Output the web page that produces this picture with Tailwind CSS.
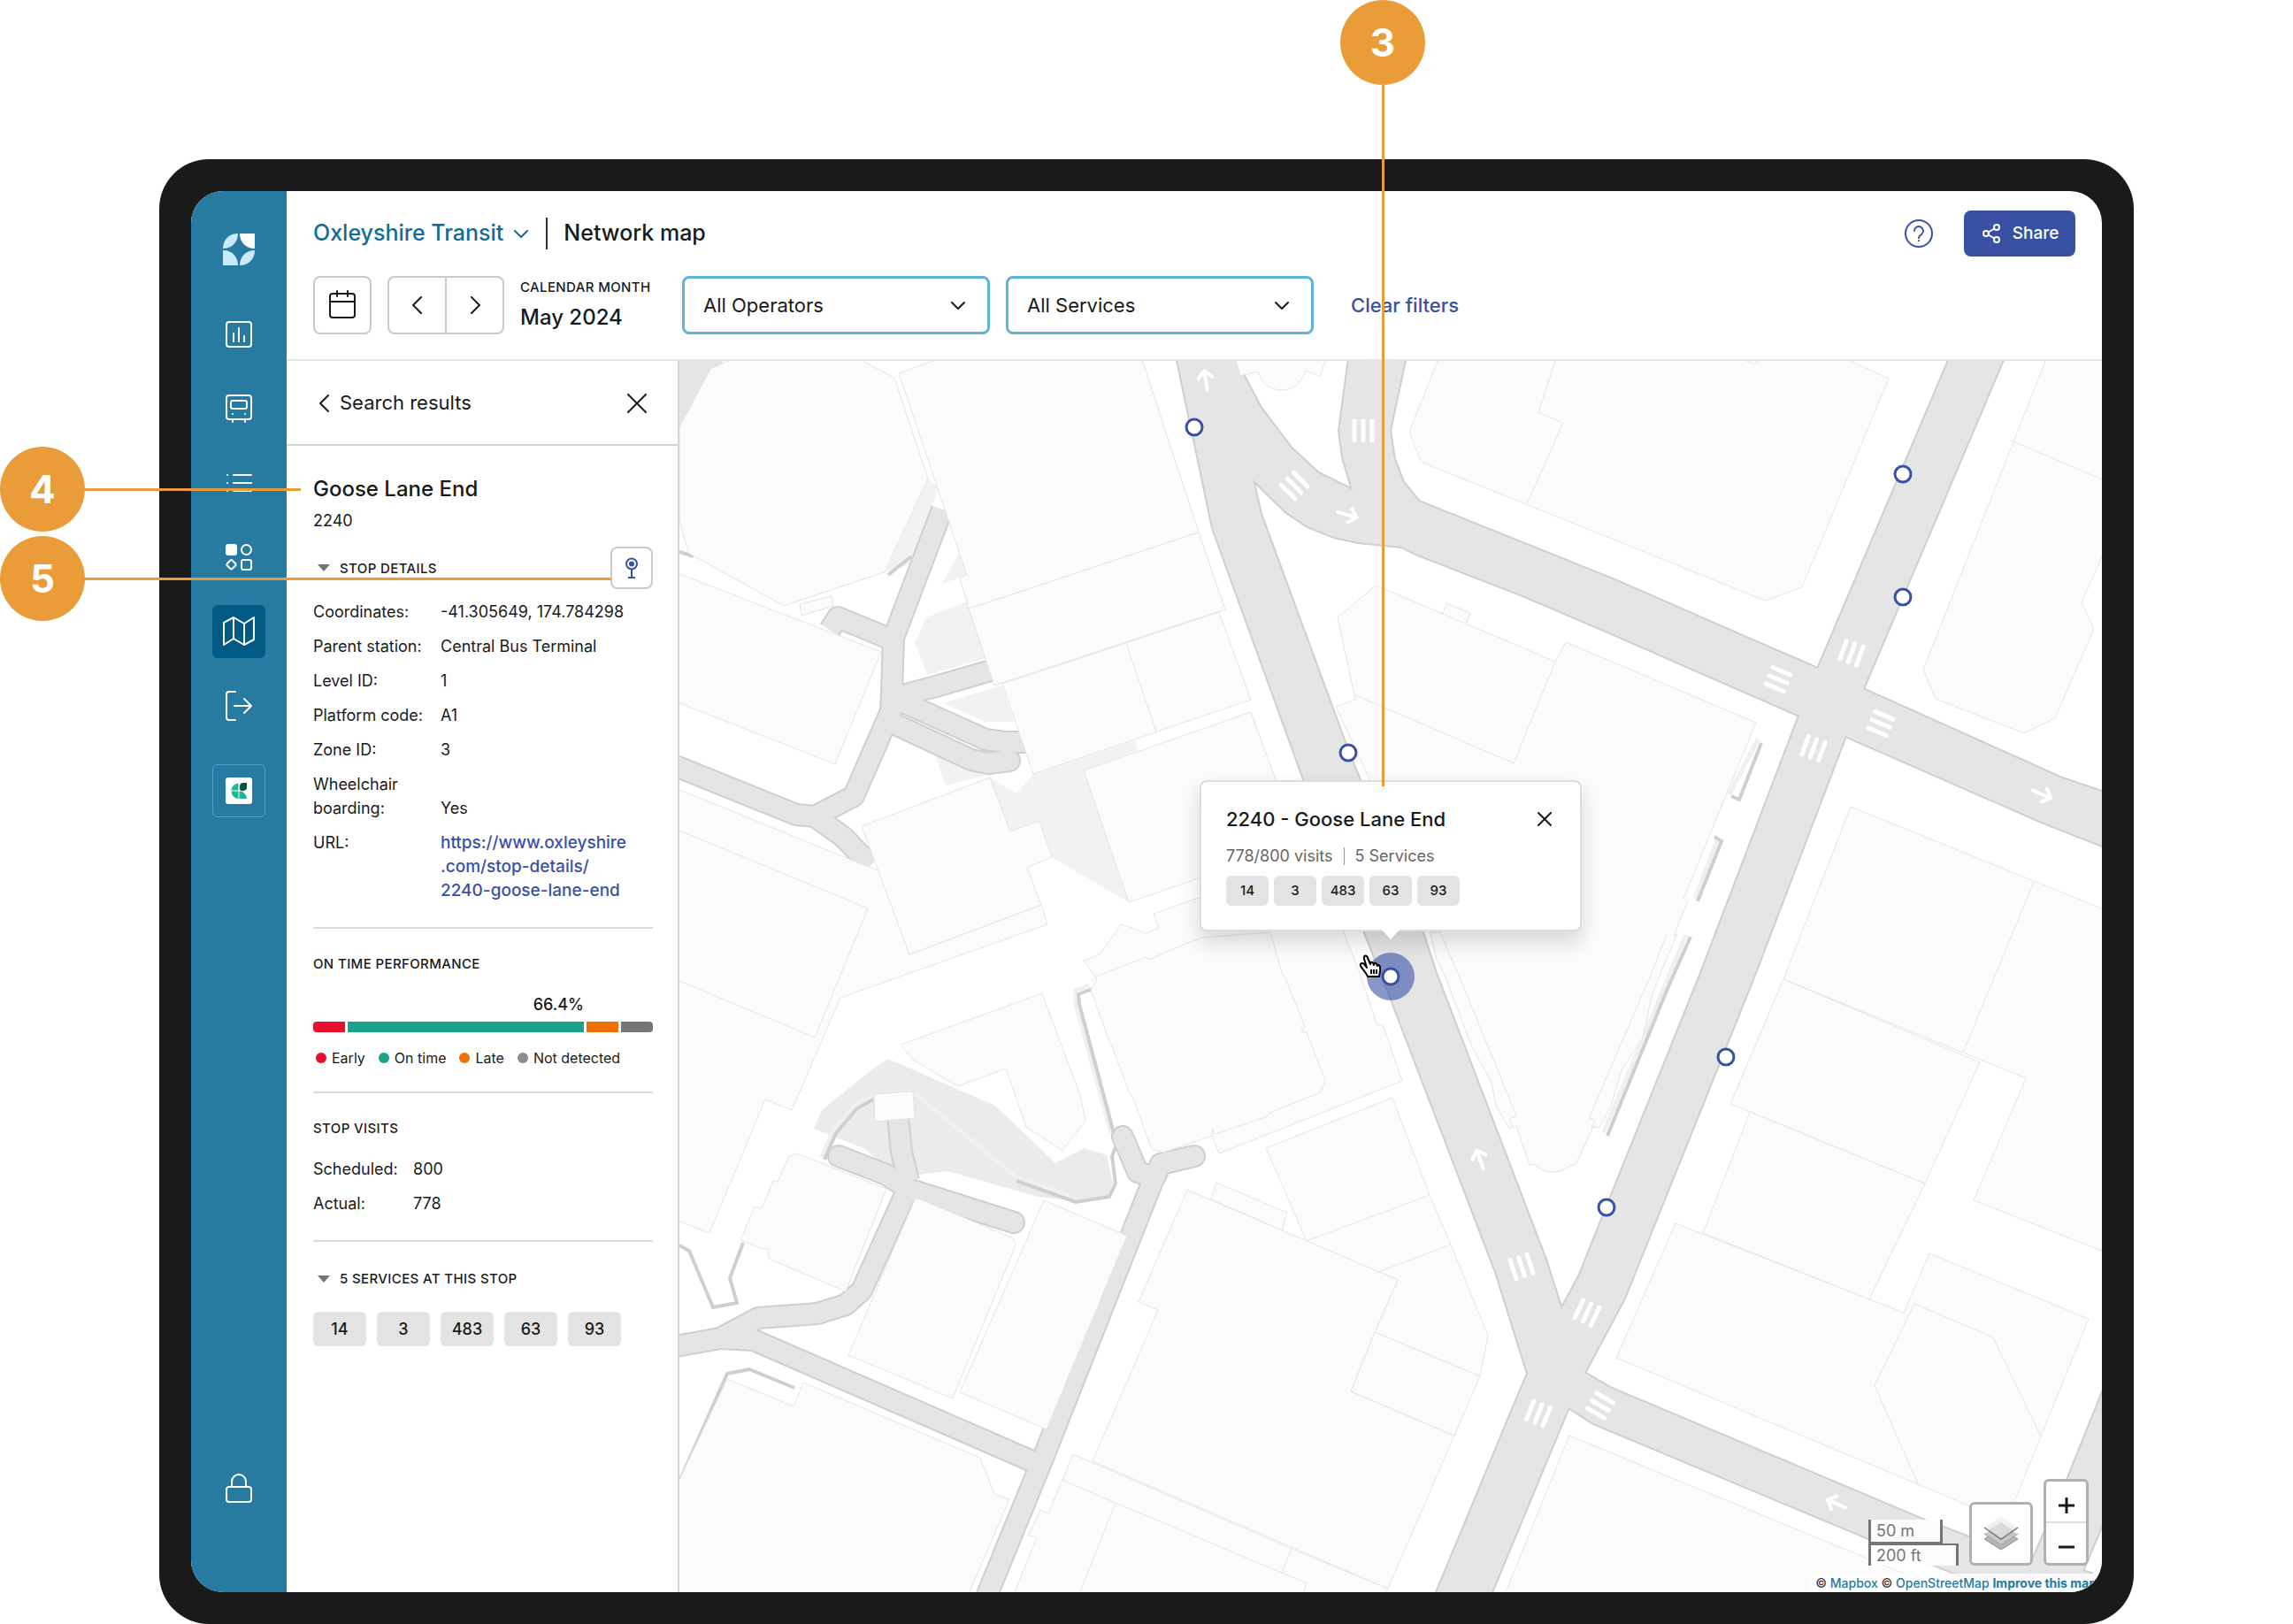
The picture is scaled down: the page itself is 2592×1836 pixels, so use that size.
<!DOCTYPE html>
<html lang="en">
<head>
    <meta charset="UTF-8">
    <meta name="viewport" content="width=device-width, initial-scale=1.0">
    <title>Network map - Oxleyshire Transit</title>
    <script src="https://cdn.jsdelivr.net/npm/@tailwindcss/browser@4"></script>
</head>
<body class="bg-white font-['Inter',sans-serif] text-[#1a1a1a]">

<div class="relative flex min-h-screen flex-col px-45 pt-45">

    <!-- Tablet frame -->
    <div class="flex flex-1 rounded-[56px] bg-[#1a1a1a] p-9">
        <div class="flex flex-1 overflow-hidden rounded-[36px] bg-white">

            <!-- Sidebar -->
            <nav class="flex w-27 shrink-0 flex-col items-center bg-[#277ba0] pt-12 pb-25 text-white" aria-label="Main">
                <a href="#" aria-label="Home" class="mb-12">
                    <svg class="size-9" viewBox="0 0 36 36">
                        <path d="M0 17C0 7 7 0 17 0C17 10 10 17 0 17Z" fill="#c9eafb"/>
                        <path d="M19 0H36V17C26 17 19 10 19 0Z" fill="#fff"/>
                        <path d="M0 19C10 19 17 26 17 36H0Z" fill="#c9eafb"/>
                        <path d="M19 36C19 26 26 19 36 19C36 29 29 36 19 36Z" fill="#c9eafb"/>
                    </svg>
                </a>
                <div class="flex flex-col gap-6">
                    <a href="#" aria-label="Reports" class="flex size-15 items-center justify-center">
                        <svg class="size-9" viewBox="0 0 36 36" fill="none" stroke="currentColor" stroke-width="2" stroke-linecap="round">
                            <rect x="4" y="4" width="28" height="28" rx="3"/><path d="M12 17v9M18 11v15M24 20v6"/>
                        </svg>
                    </a>
                    <a href="#" aria-label="Vehicles" class="flex size-15 items-center justify-center">
                        <svg class="size-9" viewBox="0 0 36 36" fill="none" stroke="currentColor" stroke-width="2" stroke-linecap="round">
                            <rect x="4" y="3" width="28" height="27" rx="3"/><rect x="9" y="9" width="18" height="9" rx="2"/><path d="M11 24h.1M25 24h.1M11 30v3M25 30v3"/>
                        </svg>
                    </a>
                    <a href="#" aria-label="Lists" class="flex size-15 items-center justify-center">
                        <svg class="size-9" viewBox="0 0 36 36" fill="none" stroke="currentColor" stroke-width="2" stroke-linecap="round">
                            <path d="M12 9h20M12 18h20M12 27h20M5 9h.1M5 18h.1M5 27h.1"/>
                        </svg>
                    </a>
                    <a href="#" aria-label="Apps" class="flex size-15 items-center justify-center">
                        <svg class="size-9" viewBox="0 0 36 36" fill="none" stroke="currentColor" stroke-width="2">
                            <rect x="4" y="4" width="11" height="11" rx="2" fill="currentColor"/><circle cx="26.500" cy="9.500" r="5.500"/>
                            <path d="M8.500 21.500L4.700 25.300a1.500 1.500 0 0 0 0 2L8.500 31a1.500 1.500 0 0 0 2 0L14.300 27.300a1.500 1.500 0 0 0 0-2L10.500 21.500a1.500 1.500 0 0 0-2 0Z"/><rect x="21" y="21" width="11" height="11" rx="2"/>
                        </svg>
                    </a>
                    <a href="#" aria-label="Network map" aria-current="page" class="flex size-15 items-center justify-center rounded-md bg-[#005a83]">
                        <svg class="size-9" viewBox="0 0 36 36" fill="none" stroke="currentColor" stroke-width="2" stroke-linejoin="round">
                            <path d="M1 8L12 2L24 9L35 2V27L24 33L12 26L1 33ZM12 2V26M24 9V33"/>
                        </svg>
                    </a>
                    <a href="#" aria-label="Export" class="flex size-15 items-center justify-center">
                        <svg class="size-9" viewBox="0 0 36 36" fill="none" stroke="currentColor" stroke-width="2" stroke-linecap="round" stroke-linejoin="round">
                            <path d="M14 2H7a3 3 0 0 0-3 3V31a3 3 0 0 0 3 3H14M13 18H32M24 10l8 8-8 8"/>
                        </svg>
                    </a>
                </div>
                <a href="#" aria-label="Workspace" class="mt-9 flex size-15 items-center justify-center rounded-md border border-[#4ba5d0]">
                    <svg class="size-[30px]" viewBox="0 0 30 30">
                        <rect width="30" height="30" rx="3" fill="#fff"/>
                        <path d="M14.500 6.500V14.500H6.500A8.500 8.500 0 0 1 14.500 6.500ZM14.500 15.500V24A8.500 8.500 0 0 1 6.500 15.500ZM15.500 15.500A8.500 8.500 0 0 1 24 24H15.500Z" fill="#1cb795"/>
                        <path d="M24 6V10a4.500 4.500 0 0 1-8 3.500V10a4 4 0 0 1 4-4Z" fill="#04543f"/>
                    </svg>
                </a>
                <a href="#" aria-label="Privacy" class="mt-auto">
                    <svg class="size-9" viewBox="0 0 36 36" fill="none" stroke="currentColor" stroke-width="2">
                        <rect x="4" y="17" width="28" height="17" rx="3"/><path d="M10 17V11a8 8 0 0 1 16 0v6"/>
                    </svg>
                </a>
            </nav>

            <div class="flex min-w-0 flex-1 flex-col">

                <!-- Header -->
                <header class="flex flex-col gap-[22px] border-b-2 border-[#e2e2e2] px-[30px] pt-[22px] pb-7">
                    <div class="flex h-13 items-center">
                        <button type="button" class="flex items-center gap-3 text-[25px] font-medium text-[#126d95]">
                            Oxleyshire Transit
                            <svg class="size-4" viewBox="0 0 16 16" fill="none" stroke="currentColor" stroke-width="2" stroke-linecap="round" stroke-linejoin="round"><path d="M1 5l7 7 7-7"/></svg>
                        </button>
                        <span class="mr-[18px] ml-5 h-9 w-0.5 bg-[#333]"></span>
                        <h1 class="text-[25px] font-medium">Network map</h1>
                        <div class="ml-auto flex items-center gap-[35px]">
                            <button type="button" aria-label="Help" class="text-[#3851a5]">
                                <svg class="size-8" viewBox="0 0 32 32" fill="none" stroke="currentColor" stroke-width="2" stroke-linecap="round">
                                    <circle cx="16" cy="16" r="15"/><path d="M11 13a5 5 0 1 1 8 4c-2 1.500-3 2-3 4M16 24v.3"/>
                                </svg>
                            </button>
                            <button type="button" class="flex h-13 w-[126px] items-center justify-center gap-3 rounded-lg bg-[#3851a5] text-[19px] font-medium text-white">
                                <svg class="size-6" viewBox="0 0 24 24" fill="none" stroke="currentColor" stroke-width="2"><circle cx="6" cy="12" r="3"/><circle cx="18" cy="5" r="3"/><circle cx="18" cy="19" r="3"/><path d="M8.500 10.500l7-4M8.500 13.500l7 4"/></svg>
                                Share
                            </button>
                        </div>
                    </div>
                    <div class="flex items-center">
                        <button type="button" aria-label="Pick a date" class="flex size-[66px] items-center justify-center rounded-lg border-2 border-[#cacaca]">
                            <svg class="size-9" viewBox="0 0 36 36" fill="none" stroke="currentColor" stroke-width="2" stroke-linecap="round"><rect x="4" y="5" width="28" height="27" rx="3"/><path d="M4 14h28M12 2v6M24 2v6"/></svg>
                        </button>
                        <div class="ml-[18px] flex h-[66px] w-33 divide-x-2 divide-[#cacaca] rounded-lg border-2 border-[#cacaca]">
                            <button type="button" aria-label="Previous month" class="flex flex-1 items-center justify-center">
                                <svg class="h-5 w-3" viewBox="0 0 12 20" fill="none" stroke="currentColor" stroke-width="2" stroke-linecap="round" stroke-linejoin="round"><path d="M10 1L1 10l9 9"/></svg>
                            </button>
                            <button type="button" aria-label="Next month" class="flex flex-1 items-center justify-center">
                                <svg class="h-5 w-3" viewBox="0 0 12 20" fill="none" stroke="currentColor" stroke-width="2" stroke-linecap="round" stroke-linejoin="round"><path d="M2 1l9 9-9 9"/></svg>
                            </button>
                        </div>
                        <div class="ml-[18px] w-[183px]">
                            <p class="text-[15px] leading-6 font-medium tracking-wide">CALENDAR MONTH</p>
                            <p class="mt-1 text-2xl leading-9 font-medium">May 2024</p>
                        </div>
                        <div class="relative">
                            <select aria-label="Operators" class="h-[66px] w-[348px] appearance-none rounded-lg border-3 border-[#60b4da] bg-white px-[21px] text-[22px]"><option>All Operators</option></select>
                            <svg class="pointer-events-none absolute top-1/2 right-7 size-4 -translate-y-1/2" viewBox="0 0 16 16" fill="none" stroke="currentColor" stroke-width="2" stroke-linecap="round" stroke-linejoin="round"><path d="M1 5l7 7 7-7"/></svg>
                        </div>
                        <div class="relative ml-[18px]">
                            <select aria-label="Services" class="h-[66px] w-[348px] appearance-none rounded-lg border-3 border-[#60b4da] bg-white px-[21px] text-[22px]"><option>All Services</option></select>
                            <svg class="pointer-events-none absolute top-1/2 right-7 size-4 -translate-y-1/2" viewBox="0 0 16 16" fill="none" stroke="currentColor" stroke-width="2" stroke-linecap="round" stroke-linejoin="round"><path d="M1 5l7 7 7-7"/></svg>
                        </div>
                        <button type="button" class="ml-[42px] text-[22px] font-medium text-[#3851a5]">Clear filters</button>
                    </div>
                </header>

                <div class="flex min-h-0 flex-1">

                    <!-- Stop panel -->
                    <aside class="w-111 shrink-0 border-r-2 border-[#d4d4d4]">
                        <div class="flex h-24 items-center justify-between border-b-2 border-[#d4d4d4] pt-px pr-[35px] pl-9">
                            <button type="button" class="flex items-center gap-3 text-[22px]">
                                <svg class="h-5 w-3" viewBox="0 0 12 20" fill="none" stroke="currentColor" stroke-width="2" stroke-linecap="round" stroke-linejoin="round"><path d="M11 1L2 10l9 9"/></svg>
                                Search results
                            </button>
                            <button type="button" aria-label="Close panel">
                                <svg class="size-[22px]" viewBox="0 0 22 22" fill="none" stroke="currentColor" stroke-width="2" stroke-linecap="round"><path d="M1 1l20 20M21 1L1 21"/></svg>
                            </button>
                        </div>
                        <div class="divide-y-2 divide-[#d9d9d9] pr-7 pl-[30px] text-lg leading-[27px]">
                            <section class="pt-[31px] pb-7">
                                <h2 class="text-2xl leading-9 font-medium">Goose Lane End</h2>
                                <p class="mt-1">2240</p>
                                <div class="mt-4 flex items-center justify-between">
                                    <h3><button type="button" class="flex items-center gap-[10px] pl-1 text-[15px] font-medium tracking-wide">
                                        <svg class="h-2 w-4" viewBox="0 0 16 8"><path d="M1 0H15L8 8Z" fill="#757575"/></svg>
                                        STOP DETAILS
                                    </button></h3>
                                    <button type="button" aria-label="Show stop" class="flex size-12 items-center justify-center rounded-lg border-2 border-[#cacaca] bg-white text-[#3851a5]">
                                        <svg class="h-6 w-4" viewBox="0 0 16 24" fill="none" stroke="currentColor" stroke-width="2"><circle cx="8" cy="7.500" r="6"/><circle cx="8" cy="7.500" r="3" fill="currentColor" stroke="none"/><path d="M8 13.500V23M4 23H12"/></svg>
                                    </button>
                                </div>
                                <dl class="mt-3 grid grid-cols-[132px_1fr] items-end gap-3">
                                    <dt>Coordinates:</dt><dd class="whitespace-nowrap">-41.305649, 174.784298</dd>
                                    <dt class="whitespace-nowrap">Parent station:</dt><dd>Central Bus Terminal</dd>
                                    <dt>Level ID:</dt><dd>1</dd>
                                    <dt class="whitespace-nowrap">Platform code:</dt><dd>A1</dd>
                                    <dt>Zone ID:</dt><dd>3</dd>
                                    <dt>Wheelchair boarding:</dt><dd>Yes</dd>
                                    <dt class="self-start">URL:</dt>
                                    <dd class="text-[19px]"><a href="#" class="font-medium text-[#3851a5]">https://www.oxleyshire<br>.com/stop-details/<br>2240-goose-lane-end</a></dd>
                                </dl>
                            </section>
                            <section class="pt-7 pb-[26px]">
                                <h3 class="text-[15px] leading-6 font-medium tracking-wide">ON TIME PERFORMANCE</h3>
                                <p class="mt-5 pr-[78px] text-right font-medium">66.4%</p>
                                <div class="mt-[6px] flex h-3 gap-[3px] overflow-hidden rounded-sm">
                                    <div class="w-9 bg-[#e8112d]"></div>
                                    <div class="flex-1 bg-[#1aa386]"></div>
                                    <div class="w-9 bg-[#ee7203]"></div>
                                    <div class="w-9 bg-[#757575]"></div>
                                </div>
                                <ul class="mt-[17px] flex gap-[15px] pl-[3px] text-base leading-6 whitespace-nowrap">
                                    <li class="flex items-center gap-[6px]"><span class="size-3 rounded-full bg-[#e8112d]"></span>Early</li>
                                    <li class="flex items-center gap-[6px]"><span class="size-3 rounded-full bg-[#1aa386]"></span>On time</li>
                                    <li class="flex items-center gap-[6px]"><span class="size-3 rounded-full bg-[#ee7203]"></span>Late</li>
                                    <li class="flex items-center gap-[6px]"><span class="size-3 rounded-full bg-[#8c8c8c]"></span>Not detected</li>
                                </ul>
                            </section>
                            <section class="py-7">
                                <h3 class="text-[15px] leading-6 font-medium tracking-wide">STOP VISITS</h3>
                                <dl class="mt-5 grid grid-cols-[101px_1fr] gap-3">
                                    <dt>Scheduled:</dt><dd>800</dd>
                                    <dt>Actual:</dt><dd>778</dd>
                                </dl>
                            </section>
                            <section class="py-7">
                                <h3><button type="button" class="flex items-center gap-[10px] pl-1 text-[15px] font-medium tracking-wide">
                                    <svg class="h-2 w-4" viewBox="0 0 16 8"><path d="M1 0H15L8 8Z" fill="#757575"/></svg>
                                    5 SERVICES AT THIS STOP
                                </button></h3>
                                <ul class="mt-6 flex gap-3 text-center font-medium">
                                    <li class="w-15 rounded-md bg-[#e3e3e3] py-[6px]">14</li>
                                    <li class="w-15 rounded-md bg-[#e3e3e3] py-[6px]">3</li>
                                    <li class="w-15 rounded-md bg-[#e3e3e3] py-[6px]">483</li>
                                    <li class="w-15 rounded-md bg-[#e3e3e3] py-[6px]">63</li>
                                    <li class="w-15 rounded-md bg-[#e3e3e3] py-[6px]">93</li>
                                </ul>
                            </section>
                        </div>
                    </aside>

                    <!-- Map -->
                    <main class="relative min-w-0 flex-1 overflow-hidden">
                        <svg class="absolute inset-0 size-full" viewBox="0 0 1608 1392" preserveAspectRatio="xMinYMin slice" role="img" aria-label="Street map around Goose Lane End">
                            <defs>
                                <path id="streets" fill-rule="evenodd" d="M561-10L603 189 706 473 805 722 923 1030 959 1145 947 1173 852 1402H914L1005 1183 1033 1201 1344 1331 1443 1371 1500 1402H1640L1596 1371 1586 1368 1608 1316 1640 1250V1090L1608 1168 1569 1265 1531 1353 1458 1330 1408 1311 1052 1161 1023 1144 1068 1060 1216 692 1318 424 1542 522 1608 548 1640 562V500L1608 487 1563 472 1338 371 1496-1 1500-10H1439L1287 348 1220 319 1060 249 836 159 818 137 808 111 803 79 822-10H758L751 42 746 79 750 109 761 146 721 126 691 98 657 53 638 17 625-10ZM648 134L657 173 756 442 840 646 855 692 979 1016 997 1072 1017 1035 1155 692 1266 401 1049 306 953 265 832 218 816 210 767 205 740 199 710 187 686 171Z"/>
                                <g id="lanes" fill="none" stroke-linejoin="round">
                                    <path d="M297 168L242 313 240 373 239 396 197 492 153 515 132 513-4 458M170 304L179 290 242 316M252 378L290 368 352 350M244 382L346 428 368 431H396M153 515L185 538 216 570"/>
                                    <path stroke-linecap="round" d="M242 410L330 451 349 455 373 452M180 899L234 920 258 936 378 974M501 877L518 917 534 922M582 899L544 908 538 922"/>
                                    <path d="M247 855L251 894 259 927M258 936L206 1051 188 1067 156 1077 89 1082 46 1105-4 1114M46 1105L84 1107 408 1248M539 917L408 1248 345 1402"/>
                                </g>
                                <g id="crossing" stroke="#fff" stroke-width="5" stroke-linecap="round"><path d="M-10-11V11M0-11V11M10-11V11"/></g>
                                <path id="arrow" d="M0 11V-10M-8-3L0-11 8-3" fill="none" stroke="#fff" stroke-width="4" stroke-linecap="round" stroke-linejoin="round"/>
                            </defs>
                            <rect width="1608" height="1392" fill="#fff"/>

                            <!-- paved areas -->
                            <path fill="#e5e5e5" d="M0 0H50L20 40 0 76Z"/>
                            <g fill="#f2f2f2">
                                <path d="M232 239L281 133 293 143 261 230ZM279 290L325 272 346 336 280 355 266 319ZM316 217L325 242 297 252ZM298 387L365 367 378 408H346ZM290 447L301 480 346 469Z"/>
                                <path d="M351 471L381 489 400 467 515 429 518 441 457 463 508 612 421 561 407 520 374 532Z"/>
                            </g>
                            <path fill="#ebebeb" d="M218 801L236 789 357 842 425 907 457 890 483 898 490 930 485 945 451 950 405 945 303 916 271 920 223 903 210 891 175 877 152 868 161 847Z"/>

                            <!-- roads: outline first, then surface -->
                            <use href="#streets" stroke="#cfcfcf" stroke-width="4" fill="none"/>
                            <use href="#lanes" stroke="#cfcfcf" stroke-width="26"/>
                            <use href="#streets" fill="#e5e5e5"/>
                            <use href="#lanes" stroke="#e5e5e5" stroke-width="22"/>

                            <!-- kerbs and walls -->
                            <g fill="none" stroke="#f0f0f0" stroke-width="5">
                                <path d="M463 706L448 712V727L488 873M161 900L174 870 199 841 218 831M266 828L381 923 448 947M1219 428L1187 490M1174 540L1148 608M1138 649L1045 872"/>
                            </g>
                            <g fill="none" stroke="#cfcfcf" stroke-width="4">
                                <path d="M467 710L451 716 452 727 491 873M164 903L177 873 201 845 219 835M381 927L448 951 486 945 493 930 489 899 493 889M0 1000L11 1006 38 1070 65 1065 57 1037 72 997M0 1267L54 1145 79 1140 130 1161"/>
                                <path d="M1223 432L1198 496 1189 492M1170 538L1178 543 1151 611M1143 651L1116 712 1049 876M236 242L262 221M9 60L24 40M0 216L16 221"/>
                            </g>

                            <!-- buildings -->
                            <g fill="#fbfbfb" stroke="#e4e4e4" stroke-linejoin="round">
                                <path d="M60-2L35 9 0 75V180L10 217 118 277 232 239 281 133 243 19 203-2Z"/>
                                <path d="M292-2L248 14 325 242 317 245 327 280 587 194 523-2Z"/>
                                <path d="M327 280L356 367 617 281 587 194Z"/>
                                <path d="M365 365L400 467 646 383 610 284ZM505 319L539 419"/>
                                <path d="M457 463L508 612 720 540 674 473 646 397Z"/>
                                <path d="M-2 240L228 329 176 456-2 386Z"/>
                                <path d="M-2 484L226 577 260 671 409 615 416 637 182 720 127 847 97 835 34 986-2 972Z"/>
                                <path fill="none" d="M0 531L213 619 153 765 0 701"/>
                                <path d="M206 526L351 471 374 532 407 520 421 561 393 573 409 615 260 671Z"/>
                                <path d="M136 275L172 266 174 277 138 288Z"/>
                                <path d="M250 773L410 715 453 830 459 859 433 893 392 866 369 800 315 820 264 790Z"/>
                                <path d="M220 829L264 826 266 856 221 860Z"/>
                                <path d="M124 899L133 896 234 936 188 1052 101 1015 100 1004 92 1003 69 994 85 956 93 958 106 927 111 928Z"/>
                                <path d="M270 947L378 992 380 1000 309 1173 191 1124 266 948Z"/>
                                <path d="M412 949L506 989 415 1208 317 1166Z"/>
                                <path d="M54 1151L129 1182 140 1155 340 1240 356 1281 373 1287 327 1394H-2V1269Z"/>
                                <path d="M457 678L475 671 499 637 528 647 542 641 536 625 587 607 740 580 751 646 769 692 788 749 796 753 817 814 610 896 602 876 547 895 534 891 512 832 509 828 487 770 485 767 465 711 472 699Z"/>
                                <path fill="none" d="M465 702L475 694 528 674 530 677 587 653 592 652 668 646 681 692 685 698 707 753 703 758 709 759 730 813 725 827 667 850 665 854 605 874 602 868V876"/>
                                <path d="M806 833L663 890 709 995 812 1039 786 1098 905 1148 914 1102 872 999 848 943Z"/>
                                <path d="M607 929L687 963 681 983 601 948Z"/>
                                <path d="M574 937L812 1039 786 1098 759 1165 876 1215 801 1388 467 1244 541 1073 519 1064Z"/>
                                <path d="M786 1098L759 1165 876 1215 905 1148Z"/>
                                <path fill="none" d="M709 995L848 943M790 1030L872 999"/>
                                <path d="M445 1236L692 1343 801 1388 798 1394H378L404 1330 394 1328 408 1299 417 1303Z"/>
                                <path fill="none" d="M433 1265L493 1291 681 1370 709 1382 705 1394M493 1291L452 1394M692 1343L681 1370"/>
                                <path d="M629-2L634 17 654 12Q660 33 681 33Q701 33 708 11L724 17 731-2Z"/>
                                <path d="M858-2L825 80 838 114 1227 271 1269 256 1367 20 1319-2Z"/>
                                <path fill="none" d="M990 0L971 58 999 70 958 162M1206 0L1216 4 1219 0"/>
                                <path d="M1545-2L1406 349 1420 382 1520 421 1555 404 1599 303 1585 273 1610 217V-2ZM1505 90L1610 135"/>
                                <path d="M787 254L744 290 764 383 742 391 860 646 848 646 856 676 864 692 896 776 918 816 923 842 938 868 946 865 961 909 966 908Q987 926 1008 909L1013 909 1033 866 1040 867 1053 842 1065 802 1089 765 1100 715 1128 647 1124 650 1140 611 1135 608 1217 409 1002 318 990 340 795 257Z"/>
                                <path fill="none" d="M990 340L943 455 792 390 764 378M860 646L880 692 946 853 938 857 942 866M1116 648L1099 692 1028 856 1035 859 1031 868"/>
                                <path d="M863 286L867 274 894 285 890 296"/>
                                <path d="M1324 504L1610 620V1007L1463 949 1522 811 1451 782 1248 699Z"/>
                                <path fill="none" d="M1531 589L1451 782"/>
                                <path d="M1248 699L1470 793 1408 930 1188 840Z"/>
                                <path d="M1210 849L1408 930 1345 1061 1157 986Z"/>
                                <path d="M1126 975L1384 1076 1413 1009 1593 1083 1500 1312 1059 1127Z"/>
                                <path d="M1401 1272L1351 1158 1396 1066 1485 1104 1540 1218"/>
                                <path d="M1006 1215L1440 1394H933Z"/>
                            </g>

                            <!-- road markings -->
                            <use href="#crossing" transform="translate(773 79)"/>
                            <use href="#crossing" transform="translate(695 141) rotate(-45)"/>
                            <use href="#crossing" transform="translate(1325 330) rotate(20)"/>
                            <use href="#crossing" transform="translate(1242 360) rotate(-67)"/>
                            <use href="#crossing" transform="translate(1358 410) rotate(-67)"/>
                            <use href="#crossing" transform="translate(1282 438) rotate(20)"/>
                            <use href="#crossing" transform="translate(952 1024) rotate(-18)"/>
                            <use href="#crossing" transform="translate(1026 1076) rotate(25)"/>
                            <use href="#crossing" transform="translate(971 1190) rotate(22)"/>
                            <use href="#crossing" transform="translate(1041 1181) rotate(-60)"/>
                            <use href="#arrow" transform="translate(595 22) rotate(-9)"/>
                            <use href="#arrow" transform="translate(755 174) rotate(106)"/>
                            <use href="#arrow" transform="translate(1540 490) rotate(114)"/>
                            <use href="#arrow" transform="translate(905 903) rotate(-20)"/>
                            <use href="#arrow" transform="translate(1308 1292) rotate(-66)"/>

                            <!-- stops -->
                            <circle cx="804" cy="696" r="27" fill="#3851a5" fill-opacity=".6"/>
                            <g fill="#fff" stroke="#3851a5" stroke-width="3">
                                <circle cx="582" cy="75" r="9"/><circle cx="756" cy="443" r="9"/><circle cx="804" cy="696" r="9"/>
                                <circle cx="1383" cy="128" r="9"/><circle cx="1383" cy="267" r="9"/>
                                <circle cx="1183" cy="787" r="9"/><circle cx="1048" cy="957" r="9"/>
                            </g>

                            <!-- pointer -->
                            <path transform="translate(768 671)" fill="#fff" stroke="#000" stroke-width="2" stroke-linejoin="round" d="M10 25C8 20 4 17 2 13C1 10 4 9 6 11L9 15L6 5C5 1 9 0 10 4L13 11C13 8 16 8 17 12C17 9 20 9 21 13C22 11 24 12 24 15C25 19 23 22 23 25ZM14 17V22M17 17V22M20 17V22"/>
                        </svg>

                        <!-- Stop popup -->
                        <div class="absolute top-[474px] left-[588px] w-[432px] rounded-lg border-2 border-[#dcdcdc] bg-white px-7 pt-[26px] pb-[27px] shadow-[0_12px_24px_rgba(0,0,0,0.15)]">
                            <div class="flex h-8 items-center justify-between">
                                <h2 class="text-[22px] font-medium">2240 - Goose Lane End</h2>
                                <button type="button" aria-label="Close popup" class="pr-1">
                                    <svg class="size-4" viewBox="0 0 16 16" fill="none" stroke="currentColor" stroke-width="2" stroke-linecap="round"><path d="M1 1l14 14M15 1L1 15"/></svg>
                                </button>
                            </div>
                            <p class="mt-3 flex items-center gap-3 text-lg leading-7 text-[#666]">778/800 visits <span class="h-5 w-px bg-[#999]"></span> 5 Services</p>
                            <ul class="mt-2 flex gap-[6px] text-center text-[15px] leading-[34px] font-medium">
                                <li class="w-12 rounded-md bg-[#e3e3e3]">14</li>
                                <li class="w-12 rounded-md bg-[#e3e3e3]">3</li>
                                <li class="w-12 rounded-md bg-[#e3e3e3]">483</li>
                                <li class="w-12 rounded-md bg-[#e3e3e3]">63</li>
                                <li class="w-12 rounded-md bg-[#e3e3e3]">93</li>
                            </ul>
                            <svg class="absolute top-full left-1/2 h-3 w-5 -translate-x-1/2" viewBox="0 0 20 12"><path d="M0 0H20L10 11Z" fill="#fff"/></svg>
                        </div>

                        <!-- Map controls -->
                        <div class="absolute right-[15px] bottom-[30px] flex items-end gap-3">
                            <div class="text-lg leading-[26px] text-[#757575]">
                                <div class="h-[27px] w-21 border-x-3 border-b-2 border-[#757575] bg-white/85 pl-[6px]">50 m</div>
                                <div class="h-[25px] w-[102px] border-x-3 border-t-2 border-[#757575] bg-white/85 pl-[6px] leading-6">200 ft</div>
                            </div>
                            <button type="button" aria-label="Layers" class="flex size-18 items-center justify-center rounded-md border-3 border-[#b0b0b0] bg-white">
                                <svg class="h-10 w-10" viewBox="0 0 40 40">
                                    <path d="M20 13L39 26 20 38 1 26Z" fill="#b5b5b5" stroke="#8f8f8f"/>
                                    <path d="M20 8L39 20 20 32 1 20Z" fill="#c8c8c8" stroke="#fff"/><path d="M1 20L20 32 39 20" fill="none" stroke="#8f8f8f"/>
                                    <path d="M20 1L39 13 20 26 1 13Z" fill="#f0f0f0"/><path d="M20 7L34 16 20 25 6 16Z" fill="#dadada"/><path d="M1 13L20 26 39 13" fill="none" stroke="#757575" stroke-width="1.500"/>
                                </svg>
                            </button>
                            <div class="flex h-[98px] w-[51px] flex-col divide-y-2 divide-[#ddd] rounded-md border-3 border-[#b0b0b0] bg-white">
                                <button type="button" aria-label="Zoom in" class="flex flex-1 items-center justify-center pt-2"><svg class="size-[18px]" viewBox="0 0 18 18" stroke="currentColor" stroke-width="3"><path d="M9 0V18M0 9H18"/></svg></button>
                                <button type="button" aria-label="Zoom out" class="flex flex-1 items-center justify-center pt-2"><svg class="size-[18px]" viewBox="0 0 18 18" stroke="currentColor" stroke-width="3"><path d="M0 9H18"/></svg></button>
                            </div>
                        </div>
                        <p class="absolute right-0 bottom-0 bg-white/80 pr-[6px] pl-[6px] text-sm leading-[21px] font-medium whitespace-nowrap text-[#277ba0]">
                            <span class="text-[#333]">©</span> <a href="#">Mapbox</a> <span class="text-[#333]">©</span> <a href="#">OpenStreetMap</a> <a href="#" class="font-bold">Improve this map</a>
                        </p>
                    </main>
                </div>
            </div>
        </div>
    </div>

    <!-- Numbered callouts -->
    <div class="absolute top-0 left-[1515px] flex flex-col items-center">
        <span class="flex size-24 items-center justify-center rounded-full bg-[#ea9c38] text-[44px] font-bold text-white">3</span>
        <span class="h-[793px] w-[3px] bg-[#ea9c38]"></span>
    </div>
    <div class="absolute top-[505px] left-0 flex items-center">
        <span class="flex size-24 items-center justify-center rounded-full bg-[#ea9c38] text-[44px] font-bold text-white">4</span>
        <span class="h-[3px] w-61 bg-[#ea9c38]"></span>
    </div>
    <div class="absolute top-[606px] left-0 flex items-center">
        <span class="flex size-24 items-center justify-center rounded-full bg-[#ea9c38] text-[44px] font-bold text-white">5</span>
        <span class="h-[3px] w-[595px] bg-[#ea9c38]"></span>
    </div>
</div>

</body>
</html>
